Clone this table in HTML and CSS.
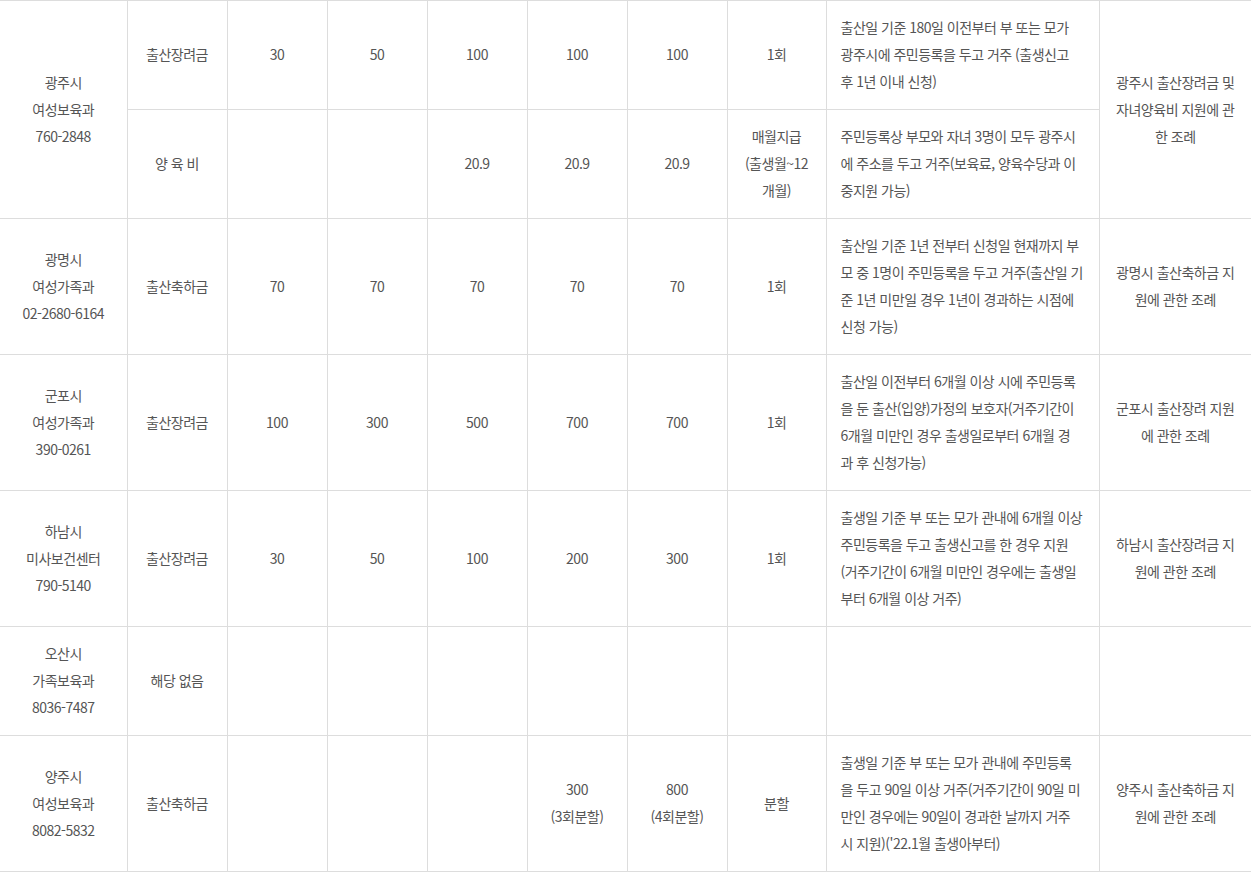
FILE: index.html
```html
<!DOCTYPE html>
<html lang="ko">
<head>
<meta charset="utf-8">
<title>출산장려금 현황</title>
<link rel="stylesheet" href="styles.css">
</head>
<body>
<table class="grid">
  <colgroup>
    <col class="c-org"><col class="c-n"><col class="c-n"><col class="c-n"><col class="c-n"><col class="c-n"><col class="c-n"><col class="c-n7"><col class="c-desc"><col class="c-law">
  </colgroup>
  <tbody>
    <tr>
      <td rowspan="2">광주시<br>여성보육과<br>760-2848</td>
      <td>출산장려금</td>
      <td>30</td><td>50</td><td>100</td><td>100</td><td>100</td><td>1회</td>
      <td class="desc">출산일 기준 180일 이전부터 부 또는 모가<br>광주시에 주민등록을 두고 거주 (출생신고<br>후 1년 이내 신청)</td>
      <td rowspan="2" class="law">광주시 출산장려금 및<br>자녀양육비 지원에 관<br>한 조례</td>
    </tr>
    <tr>
      <td>양 육 비</td>
      <td></td><td></td><td>20.9</td><td>20.9</td><td>20.9</td><td>매월지급<br>(출생월~12<br>개월)</td>
      <td class="desc">주민등록상 부모와 자녀 3명이 모두 광주시<br>에 주소를 두고 거주(보육료, 양육수당과 이<br>중지원 가능)</td>
    </tr>
    <tr>
      <td>광명시<br>여성가족과<br>02-2680-6164</td>
      <td>출산축하금</td>
      <td>70</td><td>70</td><td>70</td><td>70</td><td>70</td><td>1회</td>
      <td class="desc">출산일 기준 1년 전부터 신청일 현재까지 부<br>모 중 1명이 주민등록을 두고 거주(출산일 기<br>준 1년 미만일 경우 1년이 경과하는 시점에<br>신청 가능)</td>
      <td class="law">광명시 출산축하금 지<br>원에 관한 조례</td>
    </tr>
    <tr>
      <td>군포시<br>여성가족과<br>390-0261</td>
      <td>출산장려금</td>
      <td>100</td><td>300</td><td>500</td><td>700</td><td>700</td><td>1회</td>
      <td class="desc">출산일 이전부터 6개월 이상 시에 주민등록<br>을 둔 출산(입양)가정의 보호자(거주기간이<br>6개월 미만인 경우 출생일로부터 6개월 경<br>과 후 신청가능)</td>
      <td class="law">군포시 출산장려 지원<br>에 관한 조례</td>
    </tr>
    <tr>
      <td>하남시<br>미사보건센터<br>790-5140</td>
      <td>출산장려금</td>
      <td>30</td><td>50</td><td>100</td><td>200</td><td>300</td><td>1회</td>
      <td class="desc">출생일 기준 부 또는 모가 관내에 6개월 이상<br>주민등록을 두고 출생신고를 한 경우 지원<br>(거주기간이 6개월 미만인 경우에는 출생일<br>부터 6개월 이상 거주)</td>
      <td class="law">하남시 출산장려금 지<br>원에 관한 조례</td>
    </tr>
    <tr>
      <td>오산시<br>가족보육과<br>8036-7487</td>
      <td>해당 없음</td>
      <td></td><td></td><td></td><td></td><td></td><td></td>
      <td class="desc"></td>
      <td class="law"></td>
    </tr>
    <tr>
      <td>양주시<br>여성보육과<br>8082-5832</td>
      <td>출산축하금</td>
      <td></td><td></td><td></td><td>300<br>(3회분할)</td><td>800<br>(4회분할)</td><td>분할</td>
      <td class="desc">출생일 기준 부 또는 모가 관내에 주민등록<br>을 두고 90일 이상 거주(거주기간이 90일 미<br>만인 경우에는 90일이 경과한 날까지 거주<br>시 지원)('22.1월 출생아부터)</td>
      <td class="law">양주시 출산축하금 지<br>원에 관한 조례</td>
    </tr>
  </tbody>
</table>
</body>
</html>
```

FILE: styles.css
```css
html, body {
  margin: 0;
  padding: 0;
  background: #ffffff;
}

.grid {
  width: 1251px;
  table-layout: fixed;
  border-collapse: collapse;
  font-family: "Noto Sans CJK KR", "Noto Sans", sans-serif;
  font-size: 14px;
  line-height: 27px;
  color: #555555;
  letter-spacing: -0.5px;
  border-top: 1px solid #dddddd;
  border-bottom: 1px solid #dddddd;
}

.c-org { width: 127px; }
.c-n { width: 100px; }
.c-n7 { width: 99px; }
.c-desc { width: 273px; }
.c-law { width: 152px; }

.grid td {
  border: 1px solid #dddddd;
  padding: 13px 4px 14px;
  text-align: center;
  vertical-align: middle;
  white-space: nowrap;
  overflow: hidden;
}

.grid tr td:first-child {
  border-left: none;
}

.grid td.law {
  border-right: none;
}

.grid td.desc {
  text-align: left;
  padding-left: 14px;
  padding-right: 6px;
}
```
